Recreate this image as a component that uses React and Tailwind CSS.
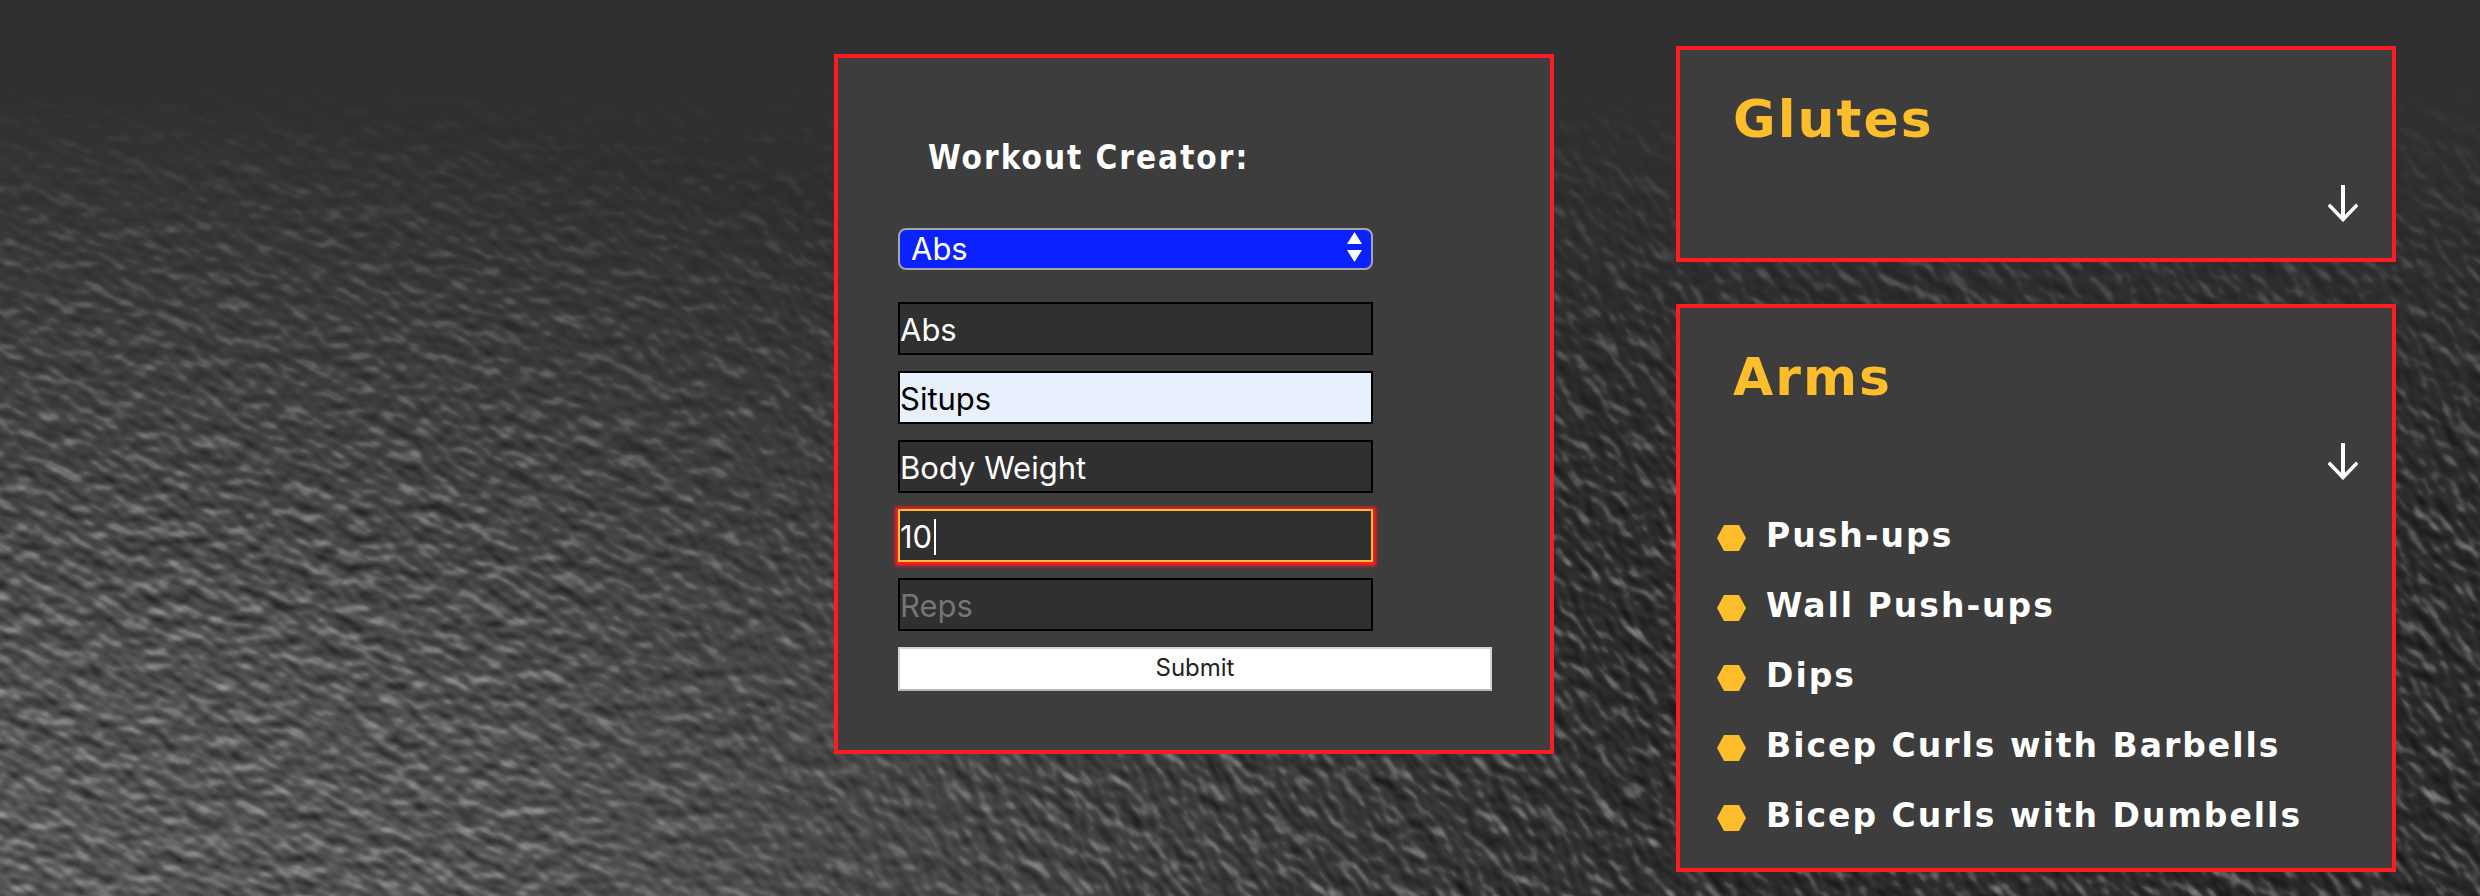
const FIELDS = [
  { id: "group", label: "Muscle group", value: "Abs" },
  { id: "exercise", label: "Exercise", value: "Situps", filled: true },
  { id: "equipment", label: "Equipment", value: "Body Weight" },
  { id: "sets", label: "Sets", value: "10", active: true },
  { id: "reps", label: "Reps", value: "" },
];

const ARMS = [
  "Push-ups",
  "Wall Push-ups",
  "Dips",
  "Bicep Curls with Barbells",
  "Bicep Curls with Dumbells",
];

function StoneBackdrop() {
  return (
    <svg
      aria-hidden="true"
      className="absolute inset-0 -z-10 h-full w-full"
      viewBox="0 0 2480 896"
      preserveAspectRatio="xMidYMid slice"
    >
      <defs>
        <filter id="grain" x="0" y="0" width="100%" height="100%" colorInterpolationFilters="sRGB">
          <feTurbulence type="fractalNoise" baseFrequency="0.04 0.062" numOctaves="2" seed="7" />
          <feDiffuseLighting surfaceScale="2" diffuseConstant="0.94" lightingColor="#ffffff">
            <feDistantLight azimuth="240" elevation="30" />
          </feDiffuseLighting>
        </filter>
        <radialGradient id="glow" gradientUnits="userSpaceOnUse" cx="0" cy="0" r="1" gradientTransform="translate(0 1000) scale(1750 900)">
          <stop offset="0" stopColor="#626262" />
          <stop offset="0.4" stopColor="#565656" />
          <stop offset="0.75" stopColor="#404040" />
          <stop offset="1" stopColor="#303030" />
        </radialGradient>
        <linearGradient id="fade" x1="0" y1="0" x2="0" y2="1">
          <stop offset="0.1" stopColor="#000000" />
          <stop offset="0.28" stopColor="#777777" />
          <stop offset="0.6" stopColor="#ffffff" />
        </linearGradient>
        <linearGradient id="toRight" x1="0" y1="0" x2="1" y2="0">
          <stop offset="0.2" stopColor="#000000" />
          <stop offset="0.45" stopColor="#ffffff" />
        </linearGradient>
        <mask id="fadeMask" maskUnits="userSpaceOnUse" x="0" y="0" width="2480" height="896">
          <rect width="2480" height="896" fill="url(#fade)" />
        </mask>
        <mask id="rightMask" maskUnits="userSpaceOnUse" x="0" y="0" width="2480" height="896">
          <rect width="2480" height="896" fill="url(#toRight)" />
        </mask>
      </defs>
      <rect width="2480" height="896" fill="#303030" />
      <rect width="2480" height="896" fill="url(#glow)" />
      <g mask="url(#fadeMask)" className="mix-blend-hard-light">
        <rect x="-400" y="-1400" width="3200" height="2600" filter="url(#grain)" transform="rotate(28)" />
        <g mask="url(#rightMask)">
          <rect x="0" y="-2400" width="2400" height="3000" filter="url(#grain)" transform="rotate(54)" />
        </g>
      </g>
    </svg>
  );
}

function Field({ id, label, value, filled, active }) {
  const tone = filled
    ? "border-black bg-[#e8effd] text-black"
    : active
      ? "border-[#febe2b] bg-[#303030] text-white shadow-[0_1px_3px_3px_#ff1a24]"
      : "border-black bg-[#303030] text-white";
  return (
    <div className="relative mb-4 w-4/5">
      <input
        id={id}
        type="text"
        aria-label={label}
        defaultValue={value}
        placeholder={label}
        className={`block h-[53px] w-full border-2 pt-0.5 font-['Inter',sans-serif] text-[31px] leading-[40px] caret-transparent outline-none placeholder:text-[#757575] ${tone}`}
      />
      {active && <span aria-hidden="true" className="absolute top-2.5 left-9 h-9 w-0.5 bg-white" />}
    </div>
  );
}

function WorkoutForm() {
  return (
    <form
      onSubmit={(e) => e.preventDefault()}
      className="mt-2 border-4 border-[#ff1a24] bg-[#3d3d3d] pt-20 pr-[58px] pb-[59px] pl-[60px]"
    >
      <h2 className="mb-[50px] pl-[30px] font-['DejaVu_Sans_Condensed','Noto_Sans',sans-serif] text-[33px] leading-[40px] font-bold tracking-[2px] text-white">
        Workout Creator:
      </h2>
      <div className="relative mb-8 w-4/5">
        <select
          id="category"
          aria-label="Category"
          defaultValue="Abs"
          className="block h-[42px] w-full appearance-none rounded-lg border-2 border-[#a5a5a5] bg-[#0a22ff] pl-[11px] font-['Inter',sans-serif] text-[31px] leading-[38px] text-white"
        >
          <option>Abs</option>
          <option>Arms</option>
          <option>Glutes</option>
        </select>
        <svg
          aria-hidden="true"
          viewBox="0 0 15 30"
          className="pointer-events-none absolute top-1 right-[11px] h-[30px] w-[15px] fill-white"
        >
          <path d="M7.5 0L15 12H0zM0 18h15L7.5 30z" />
        </svg>
      </div>
      {FIELDS.map((f) => (
        <Field key={f.id} {...f} />
      ))}
      <button
        type="submit"
        className="block h-11 w-full border-2 border-[#d4d4d4] border-b-[#b8b8b8] bg-white pb-0.5 font-['Inter',sans-serif] text-[24px] leading-[32px] text-[#222222]"
      >
        Submit
      </button>
    </form>
  );
}

function ExerciseCard({ title, items = [] }) {
  return (
    <section className="min-h-[216px] border-4 border-[#ff1a24] bg-[#3d3d3d] pt-[37px] pb-8 font-['DejaVu_Sans',sans-serif]">
      <h2 className="pl-[53px] text-[52px] leading-[64px] font-bold tracking-[2px] text-[#febe2b]">{title}</h2>
      <div className="mt-[34px] flex justify-end pr-[34px]">
        <button type="button" aria-label={`Toggle ${title}`} className="block">
          <svg viewBox="0 0 30 37" className="h-[37px] w-[30px]" fill="none" stroke="#ffffff" strokeWidth="4">
            <path d="M15 0v34" />
            <path d="M2 21l13 13.500L28 21" strokeLinecap="square" strokeWidth="3.600" />
          </svg>
        </button>
      </div>
      {items.length > 0 && (
        <ul className="mt-9 flex flex-col gap-[30px] pl-[37px]">
          {items.map((item) => (
            <li
              key={item}
              className="flex items-center gap-5 text-[33px] leading-[40px] font-bold tracking-[2px] text-white"
            >
              <svg aria-hidden="true" viewBox="0 0 29 26" className="mt-1 h-[26px] w-[29px] shrink-0 fill-[#febe2b]">
                <path d="M7 0h15l7 13-7 13H7L0 13z" />
              </svg>
              {item}
            </li>
          ))}
        </ul>
      )}
    </section>
  );
}

export default function App() {
  return (
    <main className="relative isolate min-h-screen overflow-hidden bg-[#303030]">
      <StoneBackdrop />
      <div className="grid grid-cols-[712fr_720fr_720fr] items-start gap-x-[122px] pt-[46px] pr-[84px] pb-6">
        <div className="col-start-2">
          <WorkoutForm />
        </div>
        <div className="flex flex-col gap-[42px]">
          <ExerciseCard title="Glutes" />
          <ExerciseCard title="Arms" items={ARMS} />
        </div>
      </div>
    </main>
  );
}
